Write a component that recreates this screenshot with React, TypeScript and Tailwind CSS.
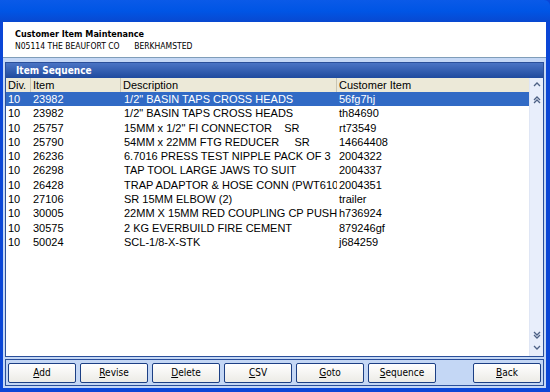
import React from "react";

const rows: [string, string, string, string][] = [
  ["10", "23982", "1/2\" BASIN TAPS CROSS HEADS", "56fg7hj"],
  ["10", "23982", "1/2\" BASIN TAPS CROSS HEADS", "th84690"],
  ["10", "25757", "15MM x 1/2\" FI CONNECTOR    SR", "rt73549"],
  ["10", "25790", "54MM x 22MM FTG REDUCER     SR", "14664408"],
  ["10", "26236", "6.7016 PRESS TEST NIPPLE PACK OF 3", "2004322"],
  ["10", "26298", "TAP TOOL LARGE JAWS TO SUIT", "2004337"],
  ["10", "26428", "TRAP ADAPTOR & HOSE CONN (PWT6100)", "2004351"],
  ["10", "27106", "SR 15MM ELBOW (2)", "trailer"],
  ["10", "30005", "22MM X 15MM RED COUPLING CP PUSHFIT", "h736924"],
  ["10", "30575", "2 KG EVERBUILD FIRE CEMENT", "879246gf"],
  ["10", "50024", "SCL-1/8-X-STK", "j684259"],
];

const tahoma = { fontFamily: 'Tahoma, "DejaVu Sans Condensed", "DejaVu Sans", sans-serif' };
const arial = { fontFamily: '"Liberation Sans", Arial, sans-serif' };

function Chevrons({ up, double }: { up: boolean; double: boolean }) {
  const d1 = up ? "M2 6 L5 3 L8 6" : "M2 2 L5 5 L8 2";
  const d2 = up ? "M2 9 L5 6 L8 9" : "M2 5 L5 8 L8 5";
  return (
    <svg width="10" height="11" viewBox="0 0 10 11">
      <path d={d1} stroke="#4d6185" strokeWidth="1.3" fill="none" />
      {double && <path d={d2} stroke="#4d6185" strokeWidth="1.3" fill="none" />}
    </svg>
  );
}

function Btn({ label, u }: { label: string; u: number }) {
  return (
    <div
      className="h-[20px] w-[68px] flex items-center justify-center border border-[#1c3f84] rounded-[2px] bg-gradient-to-b from-[#ffffff] to-[#ecebe6] text-[10px] text-black"
      style={tahoma}
    >
      <span>
        {label.slice(0, u)}
        <span className="underline">{label[u]}</span>
        {label.slice(u + 1)}
      </span>
    </div>
  );
}

export default function App() {
  return (
    <div className="w-[550px] h-[392px] flex flex-col bg-[#0b46d6] overflow-hidden">
      <div className="h-[22px] bg-gradient-to-b from-[#0a5ae8] via-[#0055e5] to-[#0848d0] rounded-tr-[6px]" />
      <div className="flex-1 flex flex-col ml-[3px] mr-[4px] mb-[4px] bg-[#c4d7f5]">
        <div className="h-[36px] bg-white border-b border-[#7f9db9] pl-[12px] pt-[6px]" style={tahoma}>
          <div className="text-[9px] font-bold leading-[12px] text-black">Customer Item Maintenance</div>
          <div className="text-[8.5px] leading-[12px] text-black whitespace-pre">N05114 THE BEAUFORT CO      BERKHAMSTED</div>
        </div>
        <div className="flex-1 flex flex-col px-[2px] pt-[4px] pb-[2px]">
          <div className="flex-1 flex flex-col border border-[#2a4f9a] bg-white">
            <div
              className="h-[15px] bg-gradient-to-b from-[#4a74c4] to-[#1f4a9e] text-white font-bold text-[10px] leading-[15px] pl-[10px]"
              style={tahoma}
            >
              Item Sequence
            </div>
            <div className="flex-1 flex">
              <div className="flex-1 flex flex-col min-w-0" style={arial}>
                <div className="h-[14px] flex bg-[#ece9d8] text-[11px] leading-[14px] text-black">
                  <div className="w-[25px] shrink-0 pl-[2px] border-r border-[#c8c5b4]">Div.</div>
                  <div className="w-[90px] shrink-0 pl-[2px] border-r border-[#c8c5b4]">Item</div>
                  <div className="w-[216px] shrink-0 pl-[2px] border-r border-[#c8c5b4]">Description</div>
                  <div className="flex-1 pl-[2px]">Customer Item</div>
                </div>
                {rows.map((r, i) => (
                  <div
                    key={i}
                    className={`h-[14.3px] flex text-[11px] leading-[14.3px] whitespace-pre ${
                      i === 0 ? "bg-[#316ac5] text-white" : "text-black"
                    }`}
                  >
                    <div className="w-[25px] shrink-0 pl-[2px]">{r[0]}</div>
                    <div className="w-[90px] shrink-0 pl-[2px]">{r[1]}</div>
                    <div className="w-[216px] shrink-0 pl-[3px] overflow-hidden">{r[2]}</div>
                    <div className="flex-1 pl-[2px]">{r[3]}</div>
                  </div>
                ))}
              </div>
              <div className="w-[14px] flex flex-col bg-[#e8eefb] border-l border-[#dfe6f5]">
                <div className="h-[14px] flex items-center justify-center"><Chevrons up double={false} /></div>
                <div className="h-[14px] flex items-center justify-center"><Chevrons up double /></div>
                <div className="flex-1" />
                <div className="h-[14px] flex items-center justify-center"><Chevrons up={false} double /></div>
                <div className="h-[14px] flex items-center justify-center"><Chevrons up={false} double={false} /></div>
              </div>
            </div>
          </div>
          <div className="h-[27px] mt-[2px] border border-[#2a4f9a] bg-[#c4d7f5] flex items-center px-[2px] gap-[4px]">
            <Btn label="Add" u={0} />
            <Btn label="Revise" u={0} />
            <Btn label="Delete" u={0} />
            <Btn label="CSV" u={0} />
            <Btn label="Goto" u={0} />
            <Btn label="Sequence" u={0} />
            <div className="flex-1" />
            <Btn label="Back" u={0} />
          </div>
        </div>
      </div>
    </div>
  );
}
